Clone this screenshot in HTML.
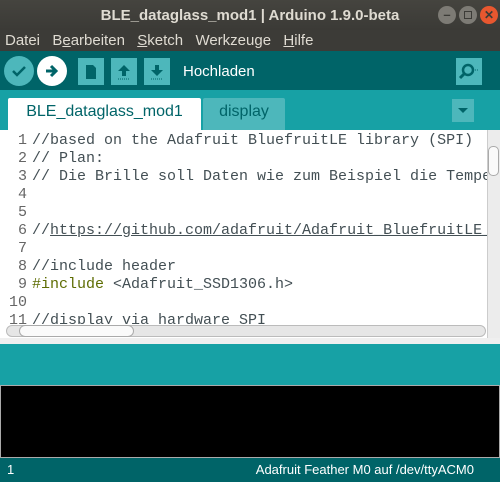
<!DOCTYPE html>
<html><head><style>
*{margin:0;padding:0;box-sizing:border-box}
body{width:500px;height:482px;overflow:hidden;background:#fff;font-family:"Liberation Sans",sans-serif;position:relative}
.abs{position:absolute}
#title{left:0;top:0;width:500px;height:30px;background:linear-gradient(#45443f,#3b3a36);color:#dfdbd2;font-weight:bold;font-size:15px;text-align:center;line-height:31px}
#menu{left:0;top:30px;width:500px;height:21px;background:#3c3b37;color:#dfdbd2;font-size:15px;line-height:22px;padding-left:5px;word-spacing:2px}
#menu u{text-decoration:underline}
#tb{left:0;top:51px;width:500px;height:39px;background:#006468}
.circ{width:30px;height:30px;border-radius:50%;top:5px;background:#4db7bb}
.sq{width:26px;height:27px;top:7px;background:#4db7bb}
#tabs{left:0;top:90px;width:500px;height:40px;background:#17a1a5}
#code{left:0;top:130px;width:487px;height:194px;background:#fff;overflow:hidden;font-family:"Liberation Mono",monospace;font-size:15px;color:#434f54;line-height:18px}
.ln{position:absolute;left:0;width:27px;text-align:right;color:#666}
.tx{position:absolute;left:32px;white-space:pre}
</style></head><body>
<div id="title" class="abs">BLE_dataglass_mod1 | Arduino 1.9.0-beta</div>
<div class="abs" style="left:438px;top:6px;width:18px;height:18px;border-radius:50%;background:#7d7b75"></div>
<div class="abs" style="left:439px;top:6px;width:16px;font-size:13px;color:#3c3b37;text-align:center;line-height:18px;font-weight:bold">–</div>
<div class="abs" style="left:459px;top:6px;width:18px;height:18px;border-radius:50%;background:#7d7b75"></div>
<div class="abs" style="left:464px;top:11px;width:8px;height:8px;border:1.5px solid #3c3b37"></div>
<div class="abs" style="left:480px;top:6px;width:18px;height:18px;border-radius:50%;background:#e8572f"></div>
<div class="abs" style="left:480px;top:6px;width:18px;font-size:12px;color:#3c3b37;text-align:center;line-height:18px;font-weight:bold">✕</div>
<div id="menu" class="abs">Datei &nbsp;B<u>e</u>arbeiten &nbsp;<u>S</u>ketch &nbsp;Werkzeuge &nbsp;<u>H</u>ilfe</div>
<div id="tb" class="abs">
<div class="abs circ" style="left:4px"><svg width="30" height="30"><path d="M9 15l4 4 8-8" stroke="#006468" stroke-width="2.5" fill="none"/></svg></div>
<div class="abs circ" style="left:37px;background:#fff"><svg width="30" height="30"><path d="M9 15h9M14 10l5 5-5 5" stroke="#006468" stroke-width="3" fill="none"/></svg></div>
<div class="abs sq" style="left:78px"><svg width="26" height="27"><path d="M8 7h7l3 3v11H8z" fill="#006468"/></svg></div>
<div class="abs sq" style="left:111px"><svg width="26" height="27"><path d="M13 7l-6 6h4v5h4v-5h4z" fill="#006468"/><path d="M7 21h12" stroke="#006468" stroke-dasharray="1 1"/></svg></div>
<div class="abs sq" style="left:144px"><svg width="26" height="27"><path d="M13 18l-6-6h4V7h4v5h4z" fill="#006468"/><path d="M7 21h12" stroke="#006468" stroke-dasharray="1 1"/></svg></div>
<div class="abs" style="left:183px;top:12px;color:#fff;font-size:15px">Hochladen</div>
<div class="abs sq" style="left:456px"><svg width="26" height="27"><circle cx="12" cy="12" r="5" stroke="#006468" stroke-width="2.5" fill="none"/><path d="M8 16l-4 4" stroke="#006468" stroke-width="3"/><path d="M19 12h4" stroke="#006468" stroke-dasharray="1 1"/></svg></div>
</div>
<div id="tabs" class="abs">
<div class="abs" style="left:8px;top:8px;width:193px;height:32px;background:#fff;border-radius:2px 2px 0 0;color:#006468;font-size:16px;text-align:center;line-height:28px">BLE_dataglass_mod1</div>
<div class="abs" style="left:203px;top:8px;width:82px;height:32px;background:#4db7bb;border-radius:2px 2px 0 0;color:#006468;font-size:16px;text-align:center;line-height:28px">display</div>
<div class="abs" style="left:452px;top:9px;width:22px;height:23px;background:#4db7bb"><svg width="22" height="23"><path d="M6 9h10l-5 5z" fill="#006468"/></svg></div>
</div>
<div id="code" class="abs">
<div class="ln" style="top:2px">1<br>2<br>3<br>4<br>5<br>6<br>7<br>8<br>9<br>10<br>11</div>
<div class="tx" style="top:2px">//based on the Adafruit BluefruitLE library (SPI)
// Plan:
// Die Brille soll Daten wie zum Beispiel die Temperatur


//<u>https://github.com/adafruit/Adafruit_BluefruitLE_nRF51</u>

//include header
<span style="color:#5e6d03">#include</span> &lt;Adafruit_SSD1306.h&gt;

//display via hardware SPI</div>
</div>
<div class="abs" style="left:487px;top:130px;width:13px;height:208px;background:#ececec;border-left:1px solid #ccc"></div>
<div class="abs" style="left:488px;top:146px;width:11px;height:30px;background:#fafafa;border:1px solid #aaa;border-radius:5px"></div>
<div class="abs" style="left:0;top:324px;width:487px;height:14px;background:#fff"></div>
<div class="abs" style="left:6px;top:325px;width:480px;height:12px;background:#e6e6e6;border:1px solid #bbb;border-radius:6px"></div>
<div class="abs" style="left:19px;top:325px;width:115px;height:12px;background:#fafafa;border:1px solid #aaa;border-radius:6px"></div>
<div class="abs" style="left:0;top:338px;width:500px;height:6px;background:#efefef"></div>
<div class="abs" style="left:0;top:344px;width:500px;height:41px;background:#17a1a5"></div>
<div class="abs" style="left:0;top:385px;width:500px;height:73px;background:#000;border:1px solid #aaa"></div>
<div class="abs" style="left:0;top:458px;width:500px;height:24px;background:#006468;color:#fff;font-size:13px;line-height:24px">
<span class="abs" style="left:7px">1</span><span class="abs" style="right:26px">Adafruit Feather M0 auf /dev/ttyACM0</span></div>
</body></html>
